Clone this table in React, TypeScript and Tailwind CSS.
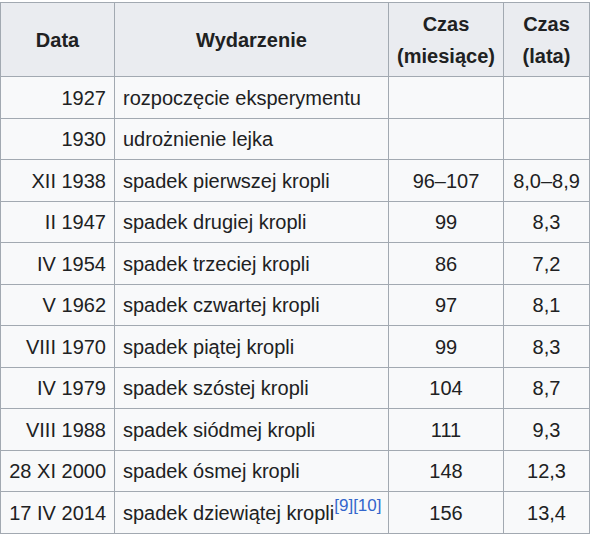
import React from "react";

const rows: { d: string; e: React.ReactNode; m: string; l: string }[] = [
  { d: "1927", e: "rozpoczęcie eksperymentu", m: "", l: "" },
  { d: "1930", e: "udrożnienie lejka", m: "", l: "" },
  { d: "XII 1938", e: "spadek pierwszej kropli", m: "96–107", l: "8,0–8,9" },
  { d: "II 1947", e: "spadek drugiej kropli", m: "99", l: "8,3" },
  { d: "IV 1954", e: "spadek trzeciej kropli", m: "86", l: "7,2" },
  { d: "V 1962", e: "spadek czwartej kropli", m: "97", l: "8,1" },
  { d: "VIII 1970", e: "spadek piątej kropli", m: "99", l: "8,3" },
  { d: "IV 1979", e: "spadek szóstej kropli", m: "104", l: "8,7" },
  { d: "VIII 1988", e: "spadek siódmej kropli", m: "111", l: "9,3" },
  { d: "28 XI 2000", e: "spadek ósmej kropli", m: "148", l: "12,3" },
  {
    d: "17 IV 2014",
    e: (
      <>
        spadek dziewiątej kropli
        <sup className="text-[17px] leading-none text-[#3366cc] relative -top-[9px] align-baseline">[9][10]</sup>
      </>
    ),
    m: "156",
    l: "13,4",
  },
];

export default function App() {
  return (
    <div className="bg-white w-[592px] h-[539px] pt-[2px]" style={{ fontFamily: '"Liberation Sans", Arial, sans-serif' }}>
      <table className="table-fixed border-collapse w-[589px] text-[20px] leading-[32px] text-[#202122] bg-[#f8f9fa] border border-[#a2a9b1]">
        <colgroup>
          <col className="w-[114px]" />
          <col className="w-[274px]" />
          <col className="w-[115px]" />
          <col className="w-[86px]" />
        </colgroup>
        <thead>
          <tr className="h-[74px]">
            <th className="bg-[#eaecf0] border border-[#a2a9b1] px-[8px] py-[4px] font-bold text-center">Data</th>
            <th className="bg-[#eaecf0] border border-[#a2a9b1] px-[8px] py-[4px] font-bold text-center">Wydarzenie</th>
            <th className="bg-[#eaecf0] border border-[#a2a9b1] px-[4px] py-[4px] font-bold text-center">
              Czas
              <br />
              (miesiące)
            </th>
            <th className="bg-[#eaecf0] border border-[#a2a9b1] px-[4px] py-[4px] font-bold text-center">
              Czas
              <br />
              (lata)
            </th>
          </tr>
        </thead>
        <tbody>
          {rows.map((r, i) => (
            <tr key={i} className={i % 2 === 0 ? "h-[42px]" : "h-[41px]"}>
              <td className="border border-[#a2a9b1] px-[8px] py-0 text-right whitespace-nowrap">{r.d}</td>
              <td className="border border-[#a2a9b1] px-[8px] py-0 text-left whitespace-nowrap">{r.e}</td>
              <td className="border border-[#a2a9b1] px-[8px] py-0 text-center">{r.m}</td>
              <td className="border border-[#a2a9b1] px-[8px] py-0 text-center">{r.l}</td>
            </tr>
          ))}
        </tbody>
      </table>
    </div>
  );
}
